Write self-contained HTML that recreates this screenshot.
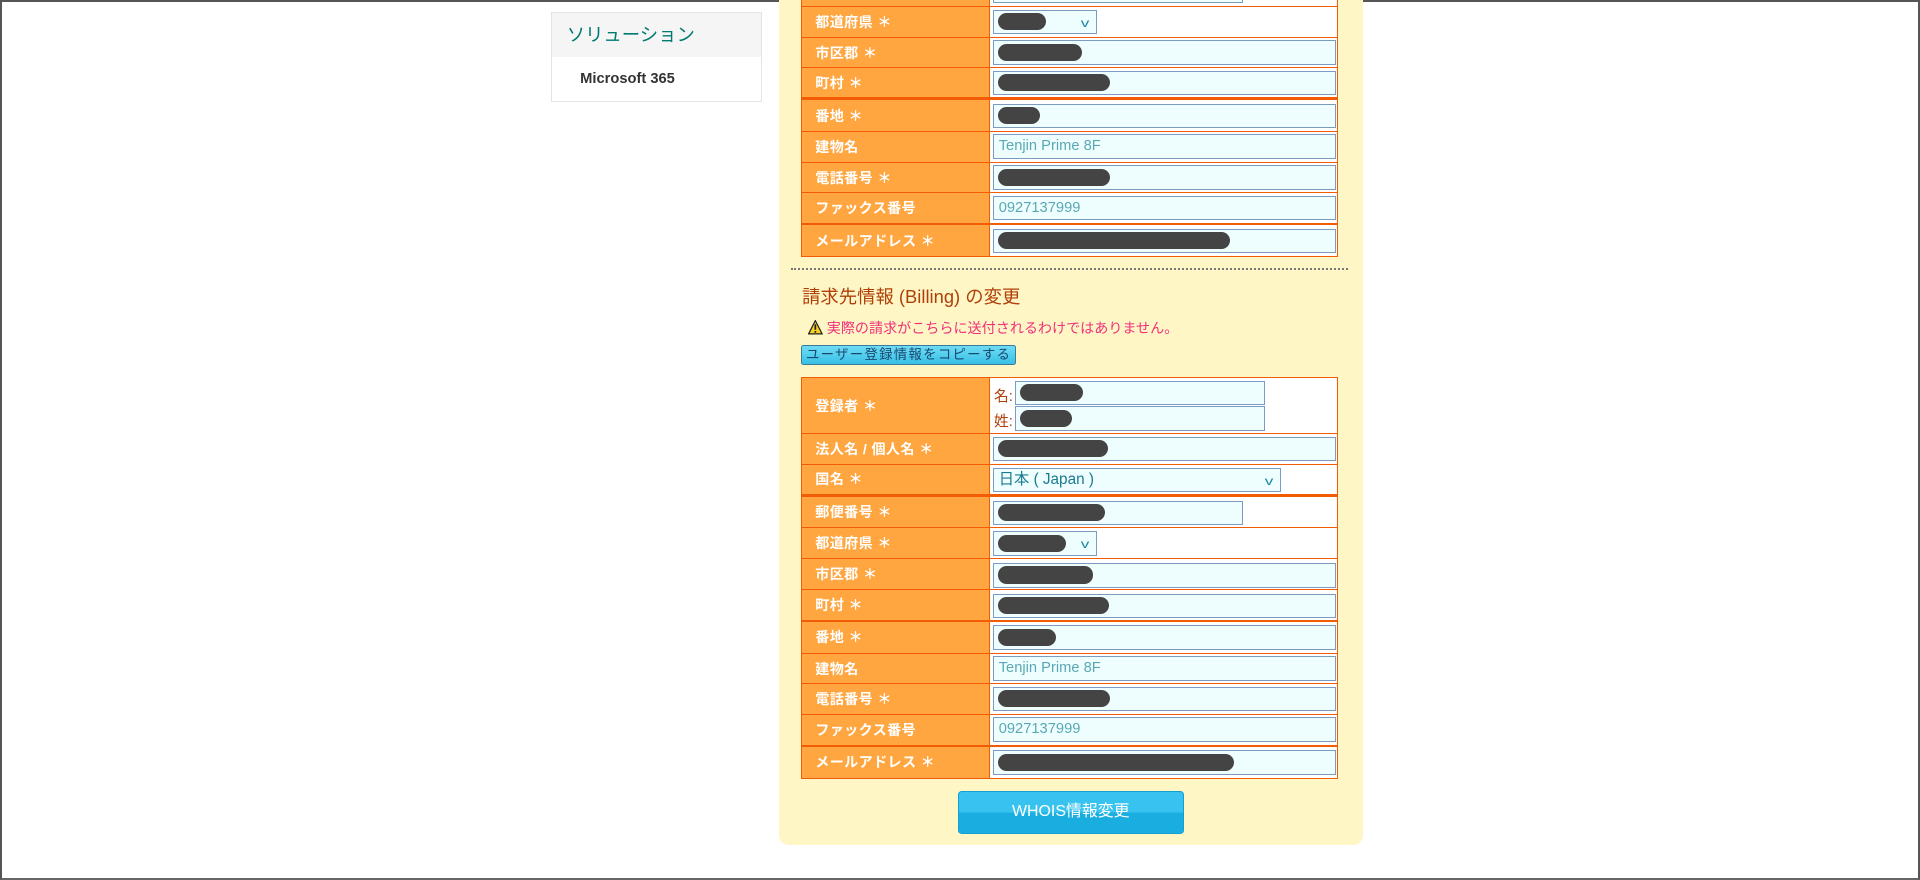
<!DOCTYPE html>
<html><head><meta charset="utf-8">
<style>
html,body{margin:0;padding:0;width:1920px;height:880px;overflow:hidden;background:#fff}
#frame{position:absolute;left:0;top:0;width:1916px;height:876px;border:2px solid #555;border-bottom-color:#666}
#s{position:absolute;left:0;top:0;width:1568px;height:719px;zoom:1.22449;font-family:"Liberation Sans","Noto Sans CJK JP",sans-serif}
.side{position:absolute;left:450px;top:10px;width:171px;height:72px;border:1px solid #e4e4e4;background:#fff}
.side .h{height:36px;background:#f5f5f5;color:#007a70;font-size:15px;line-height:36px;padding-left:12px}
.side .i{font-size:12px;color:#333;padding-left:23px;line-height:36px;font-weight:bold}
.panel{position:absolute;left:636px;top:-10px;width:477px;height:700px;background:#fff6c6;border-radius:0 0 8px 8px}
.row{position:absolute;left:654px;width:439px;box-sizing:border-box;border:1px solid #f25c05;background:#fff}
.row .l{position:absolute;left:0;top:0;bottom:0;width:154px;background:#ffa640;border-right:1px solid #f25c05;color:#fff;font-size:11.5px;font-weight:bold;letter-spacing:0.3px;display:flex;align-items:center;padding-left:11px;box-sizing:border-box}
.in{position:absolute;height:20px;box-sizing:border-box;border:1px solid #7c9bc0;background:#eefeff;color:#5aa8b4;font-size:12px;line-height:18px;padding-left:4px}
.b{position:absolute;left:3px;top:2px;height:14px;border-radius:7px;background:#444}
.ch{position:absolute;right:6px;top:1px;color:#1a8aa0;font-size:10px;transform:scaleX(1.4)}
.dot{position:absolute;left:646px;top:219px;width:455px;border-top:2px dotted #777}
.hd{position:absolute;left:655px;top:231px;font-size:15px;color:#b0400a}
.warn{position:absolute;left:660px;top:260px;font-size:11.5px;color:#f0307a}
.cp{position:absolute;left:654px;top:282px;width:176px;height:16px;box-sizing:border-box;border:1px solid #3a7a9a;border-radius:2px;background:linear-gradient(#6fdcf5,#37c0e6);color:#1a4a70;font-size:11px;line-height:14px;text-align:center;letter-spacing:1px}
.go{position:absolute;left:782px;top:646px;width:185px;height:35px;border-radius:3px;background:linear-gradient(#38c2f0 50%,#1aaee0 50%);border:1px solid #12a0d4;box-sizing:border-box;color:#fff;font-size:13px;line-height:33px;text-align:center}
.nm{position:absolute;left:2px;font-size:12px;color:#b0400a}
</style></head><body>
<div id="frame"></div>
<div id="s">
<div class="side"><div class="h">ソリューション</div><div class="i">Microsoft 365</div></div>
<div class="panel"></div>

<div class="row" style="top:-20px;height:26px"><div class="l">郵便番号 ＊</div><div class="in" style="left:156px;top:2px;width:204px"></div></div>
<div class="row" style="top:5px;height:26px"><div class="l">都道府県 ＊</div><div class="in" style="left:156px;top:2px;width:85px"><div class="b" style="width:40px"></div><span class="ch">v</span></div></div>
<div class="row" style="top:30px;height:26px"><div class="l">市区郡 ＊</div><div class="in" style="left:156px;top:2px;width:280px"><div class="b" style="width:69px"></div></div></div>
<div class="row" style="top:55px;height:26px;border-bottom-width:2px"><div class="l">町村 ＊</div><div class="in" style="left:156px;top:2px;width:280px"><div class="b" style="width:92px"></div></div></div>
<div class="row" style="top:81px;height:27px"><div class="l">番地 ＊</div><div class="in" style="left:156px;top:3px;width:280px"><div class="b" style="width:35px"></div></div></div>
<div class="row" style="top:107px;height:26px"><div class="l">建物名</div><div class="in" style="left:156px;top:2px;width:280px">Tenjin Prime 8F</div></div>
<div class="row" style="top:132px;height:26px"><div class="l">電話番号 ＊</div><div class="in" style="left:156px;top:2px;width:280px"><div class="b" style="width:92px"></div></div></div>
<div class="row" style="top:157px;height:27px;border-bottom-width:2px"><div class="l">ファックス番号</div><div class="in" style="left:156px;top:2px;width:280px">0927137999</div></div>
<div class="row" style="top:183px;height:27px"><div class="l">メールアドレス ＊</div><div class="in" style="left:156px;top:3px;width:280px"><div class="b" style="width:190px"></div></div></div>

<div class="dot"></div>
<div class="hd">請求先情報 (Billing) の変更</div>
<div class="warn"><svg width="12" height="12" viewBox="0 0 12 12" style="vertical-align:-1px"><path d="M6 0.5 L11.5 11.3 L0.5 11.3 Z" fill="#f8d020" stroke="#222" stroke-width="1"/><rect x="5.3" y="3.5" width="1.4" height="4.5" fill="#222"/><rect x="5.3" y="9" width="1.4" height="1.4" fill="#222"/></svg> 実際の請求がこちらに送付されるわけではありません。</div>
<div class="cp">ユーザー登録情報をコピーする</div>

<div class="row" style="top:308px;height:47px"><div class="l">登録者 ＊</div>
 <span class="nm" style="left:157px;top:6px">名:</span><div class="in" style="left:174px;top:2px;width:204px"><div class="b" style="width:52px"></div></div>
 <span class="nm" style="left:157px;top:26px">姓:</span><div class="in" style="left:174px;top:23px;width:204px"><div class="b" style="width:43px"></div></div></div>
<div class="row" style="top:354px;height:26px"><div class="l">法人名 / 個人名 ＊</div><div class="in" style="left:156px;top:2px;width:280px"><div class="b" style="width:90px"></div></div></div>
<div class="row" style="top:379px;height:26px;border-bottom-width:2px"><div class="l">国名 ＊</div><div class="in" style="left:156px;top:2px;width:235px;color:#1a7a90;font-size:12.5px">日本 ( Japan )<span class="ch">v</span></div></div>
<div class="row" style="top:405px;height:26px"><div class="l">郵便番号 ＊</div><div class="in" style="left:156px;top:3px;width:204px"><div class="b" style="width:88px"></div></div></div>
<div class="row" style="top:430px;height:27px"><div class="l">都道府県 ＊</div><div class="in" style="left:156px;top:3px;width:85px"><div class="b" style="width:56px"></div><span class="ch">v</span></div></div>
<div class="row" style="top:456px;height:26px"><div class="l">市区郡 ＊</div><div class="in" style="left:156px;top:3px;width:280px"><div class="b" style="width:78px"></div></div></div>
<div class="row" style="top:481px;height:27px;border-bottom-width:2px"><div class="l">町村 ＊</div><div class="in" style="left:156px;top:3px;width:280px"><div class="b" style="width:91px"></div></div></div>
<div class="row" style="top:507px;height:27px"><div class="l">番地 ＊</div><div class="in" style="left:156px;top:3px;width:280px"><div class="b" style="width:48px"></div></div></div>
<div class="row" style="top:533px;height:26px"><div class="l">建物名</div><div class="in" style="left:156px;top:2px;width:280px">Tenjin Prime 8F</div></div>
<div class="row" style="top:558px;height:26px"><div class="l">電話番号 ＊</div><div class="in" style="left:156px;top:2px;width:280px"><div class="b" style="width:92px"></div></div></div>
<div class="row" style="top:583px;height:27px;border-bottom-width:2px"><div class="l">ファックス番号</div><div class="in" style="left:156px;top:2px;width:280px">0927137999</div></div>
<div class="row" style="top:609px;height:27px"><div class="l">メールアドレス ＊</div><div class="in" style="left:156px;top:3px;width:280px"><div class="b" style="width:193px"></div></div></div>

<div class="go">WHOIS情報変更</div>
</div>
</body></html>
